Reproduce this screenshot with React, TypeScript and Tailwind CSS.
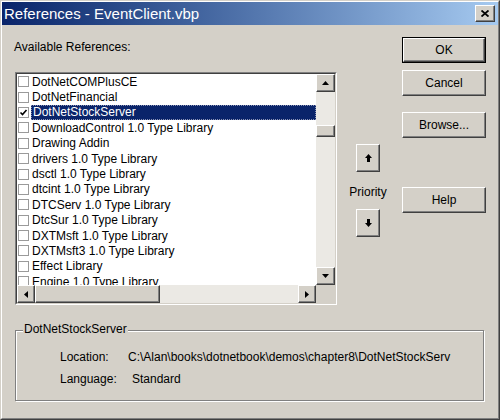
import React from 'react'

const items = [
  'DotNetCOMPlusCE',
  'DotNetFinancial',
  'DotNetStockServer',
  'DownloadControl 1.0 Type Library',
  'Drawing Addin',
  'drivers 1.0 Type Library',
  'dsctl 1.0 Type Library',
  'dtcint 1.0 Type Library',
  'DTCServ 1.0 Type Library',
  'DtcSur 1.0 Type Library',
  'DXTMsft 1.0 Type Library',
  'DXTMsft3 1.0 Type Library',
  'Effect Library',
  'Engine 1.0 Type Library',
]

const raised =
  'border border-t-white border-l-white border-r-[#404040] border-b-[#404040] shadow-[inset_-1px_-1px_0_#808080] bg-[#d4d0c8]'

function Button({ text, isDefault }: { text: string; isDefault?: boolean }) {
  const face = <div className={`h-full w-full flex items-center justify-center ${raised}`}>{text}</div>
  return (
    <div className={`w-[84px] h-[26px] ${isDefault ? 'border border-black' : ''}`}>
      {face}
    </div>
  )
}

function Tri({ dir }: { dir: 'up' | 'down' | 'left' | 'right' }) {
  const paths = {
    up: 'M0 4 L3.5 0 L7 4 Z',
    down: 'M0 0 L7 0 L3.5 4 Z',
    left: 'M4 0 L4 7 L0 3.5 Z',
    right: 'M0 0 L4 3.5 L0 7 Z',
  }
  const vertical = dir === 'up' || dir === 'down'
  return (
    <svg width={vertical ? 7 : 4} height={vertical ? 4 : 7} viewBox={vertical ? '0 0 7 4' : '0 0 4 7'}>
      <path d={paths[dir]} fill="black" />
    </svg>
  )
}

function ScrollBtn({ dir, className }: { dir: 'up' | 'down' | 'left' | 'right'; className: string }) {
  return (
    <div className={`${className} flex items-center justify-center shrink-0 ${raised}`}>
      <Tri dir={dir} />
    </div>
  )
}

function Arrow({ up }: { up?: boolean }) {
  return (
    <div className={`w-[24px] h-[28px] flex items-center justify-center ${raised}`}>
      <svg width="7" height="8" viewBox="0 0 7 8" className={up ? '' : 'rotate-180'}>
        <path d="M3.5 0 L7 4 H5 V8 H2 V4 H0 Z" fill="black" />
      </svg>
    </div>
  )
}

function Row({ label, checked }: { label: string; checked?: boolean }) {
  return (
    <div className="h-[15.4px] flex items-center shrink-0">
      <div className="ml-[1px] w-[11px] h-[11px] border border-[#9a9a9a] bg-white flex items-center justify-center shrink-0">
        {checked && (
          <svg width="9" height="9" viewBox="0 0 9 9">
            <path d="M1.5 4.5 L3.5 6.5 L7.5 2" stroke="black" strokeWidth="1.6" fill="none" />
          </svg>
        )}
      </div>
      <div
        className={`ml-[2px] pl-[1px] h-full flex-1 flex items-center whitespace-nowrap ${
          checked ? 'bg-[#0a246a] text-white border border-dotted border-[#8c94b4]' : ''
        }`}
      >
        {label}
      </div>
    </div>
  )
}

export default function App() {
  return (
    <div className="w-[500px] h-[420px] border border-[#404040] border-t-[#d4d0c8] border-l-[#d4d0c8] font-['Liberation_Sans',Arial,sans-serif] text-[12px] text-black">
      <div className="h-full w-full border border-white border-r-[#808080] border-b-[#808080] bg-[#d4d0c8] flex flex-col">
        {/* title bar */}
        <div className="h-[23px] shrink-0 flex items-center justify-between pl-[2px] pr-[3px] bg-linear-to-r from-[#0a246a] to-[#a6caf0]">
          <span className="text-white text-[15px] leading-[18px]">References - EventClient.vbp</span>
          <div className={`w-[20px] h-[17px] flex items-center justify-center ${raised}`}>
            <svg width="8" height="7" viewBox="0 0 8 7">
              <path d="M0.5 0.5 L7.5 6.5 M7.5 0.5 L0.5 6.5" stroke="black" strokeWidth="1.8" />
            </svg>
          </div>
        </div>

        <div className="flex h-[280px] shrink-0">
          {/* list column */}
          <div className="w-[335px] pl-[13px] flex flex-col">
            <div className="mt-[15px] leading-[14px] -ml-px">Available References:</div>
            <div className="mt-[18px] w-[322px] h-[233px] border border-[#808080] border-r-white border-b-white">
              <div className="h-full w-full border border-[#404040] border-r-[#d4d0c8] border-b-[#d4d0c8] bg-white flex flex-col">
                <div className="h-[211px] flex">
                  <div className="w-[299px] overflow-hidden flex flex-col">
                    {items.map((it) => (
                      <Row key={it} label={it} checked={it === 'DotNetStockServer'} />
                    ))}
                  </div>
                  <div className="w-[19px] flex flex-col bg-[#ebe9e4]">
                    <ScrollBtn dir="up" className="h-[18px]" />
                    <div className="flex-1">
                      <div className={`mt-[33px] h-[12px] ${raised}`} />
                    </div>
                    <ScrollBtn dir="down" className="h-[18px]" />
                  </div>
                </div>
                <div className="h-[18px] flex bg-[#ebe9e4]">
                  <ScrollBtn dir="left" className="w-[18px]" />
                  <div className="flex-1 flex">
                    <div className={`w-[125px] h-full ${raised}`} />
                  </div>
                  <ScrollBtn dir="right" className="w-[18px]" />
                  <div className="w-[19px] bg-[#d4d0c8]" />
                </div>
              </div>
            </div>
          </div>

          {/* priority column */}
          <div className="w-[65px] pr-[3px] pt-[119px] flex flex-col items-center">
            <Arrow up />
            <div className="mt-[13px] leading-[14px]">Priority</div>
            <div className="mt-[10px]">
              <Arrow />
            </div>
          </div>

          {/* buttons */}
          <div className="w-[84px] pt-[12px] flex flex-col">
            <Button text="OK" isDefault />
            <div className="mt-[7px]">
              <Button text="Cancel" />
            </div>
            <div className="mt-[16px]">
              <Button text="Browse..." />
            </div>
            <div className="mt-[49px]">
              <Button text="Help" />
            </div>
          </div>
        </div>

        {/* group box */}
        <div className="relative mt-[25px] ml-[13px] w-[469px] h-[71px] border border-[#808080] shadow-[inset_1px_1px_0_white,1px_1px_0_white]">
          <span className="absolute left-[7px] top-[-9px] px-[1px] bg-[#d4d0c8] leading-[14px]">DotNetStockServer</span>
          <div className="pt-[19px] pl-[44px] flex flex-col leading-[14px]">
            <div className="flex whitespace-nowrap">
              <span className="w-[68px]">Location:</span>
              <span>{'C:\\Alan\\books\\dotnetbook\\demos\\chapter8\\DotNetStockServ'}</span>
            </div>
            <div className="mt-[8px] flex whitespace-nowrap">
              <span className="w-[72px]">Language:</span>
              <span>Standard</span>
            </div>
          </div>
        </div>
      </div>
    </div>
  )
}
